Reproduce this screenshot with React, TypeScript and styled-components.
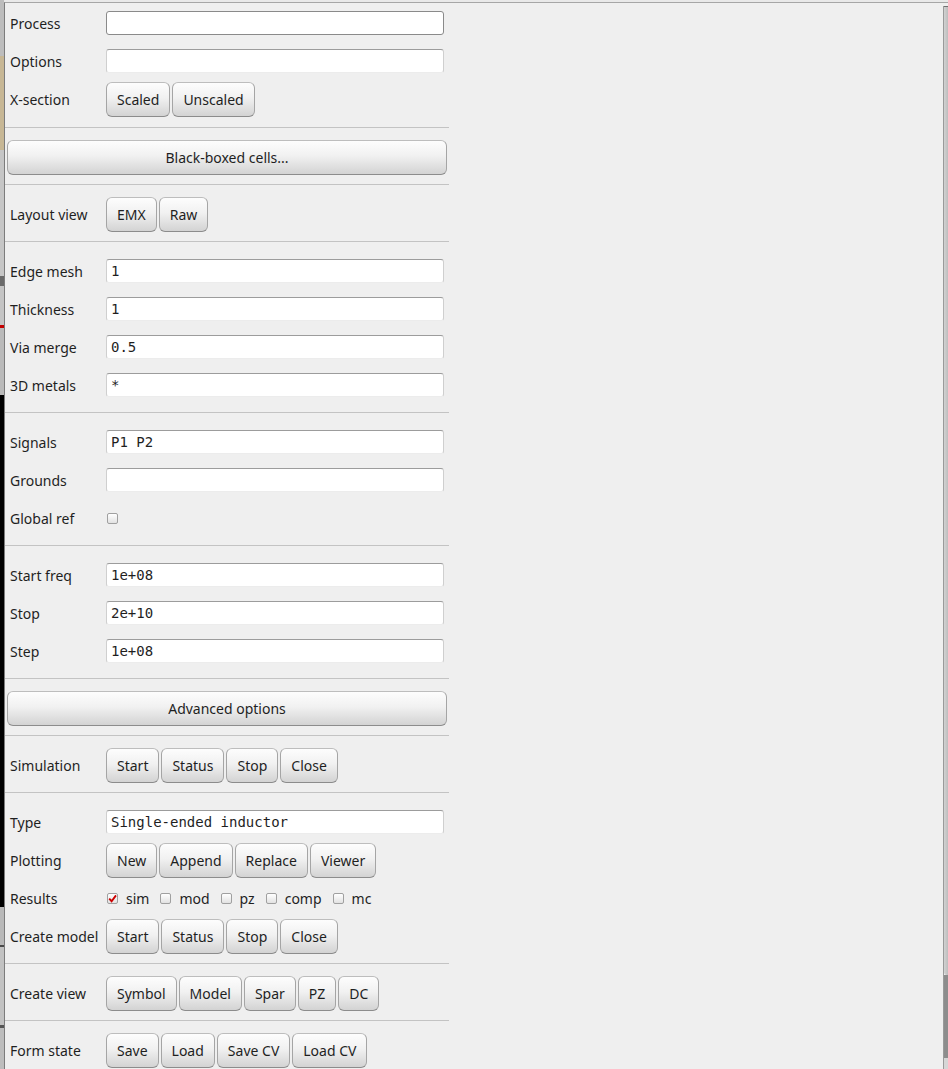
import React from "react";
import styled, { createGlobalStyle } from "styled-components";

const GlobalStyle = createGlobalStyle`
  html, body { margin: 0; padding: 0; background: #e9e9e9; }
  body { font-family: "Noto Sans", "Open Sans", sans-serif; }
  * { box-sizing: border-box; }
`;

const Window = styled.div`
  display: flex;
  width: 948px;
  height: 1069px;
  overflow: hidden;
`;

const Backdrop = styled.div`
  width: 4px;
  flex-shrink: 0;
  display: flex;
  flex-direction: column;
`;

const Swatch = styled.div<{ $h: number; $c: string }>`
  height: ${(p) => p.$h}px;
  flex-shrink: 0;
  background: ${(p) => p.$c};
`;

const Frame = styled.div`
  flex: 1;
  display: flex;
  margin-top: 2px;
  border-top: 1px solid #a6a6a6;
  border-left: 1px solid #7c7c7c;
  background: #efefef;
  min-width: 0;
`;

const Form = styled.div`
  width: 444px;
  flex-shrink: 0;
  display: flex;
  flex-direction: column;
`;

const Spacer = styled.div`
  flex: 1;
`;

const Section = styled.div<{ $first?: boolean; $last?: boolean }>`
  padding: ${(p) => (p.$first ? "1px 0 9px" : "10px 0 8px")};
  border-bottom: ${(p) => (p.$last ? "none" : "1px solid #c3c3c3")};
`;

const Row = styled.div`
  display: grid;
  grid-template-columns: 96px 1fr;
  align-items: center;
  height: 38px;
  padding: 0 5px;
`;

const WideRow = styled.div`
  display: flex;
  align-items: center;
  height: 38px;
  padding: 0 2px;
`;

const Label = styled.span`
  font-size: 14px;
  color: #1f1f1f;
  white-space: nowrap;
  line-height: 19px;
`;

const Field = styled.input<{ $focused?: boolean }>`
  width: 338px;
  height: 24px;
  margin: 0;
  padding: 0 4px;
  font-family: "DejaVu Sans Mono", "Liberation Mono", monospace;
  font-size: 14px;
  color: #1f1f1f;
  background: #ffffff;
  border-radius: 3px;
  outline: none;
  border: 1px solid ${(p) => (p.$focused ? "#8a8a8a" : "#cfcfcf")};
  border-top-color: ${(p) => (p.$focused ? "#8a8a8a" : "#9c9c9c")};
  border-bottom-color: ${(p) => (p.$focused ? "#8a8a8a" : "#ececec")};
`;

const ButtonGroup = styled.div`
  display: flex;
  gap: 2px;
`;

const Button = styled.button`
  height: 35px;
  padding: 0 10px;
  margin: 0;
  font-family: "Noto Sans", "Open Sans", sans-serif;
  font-size: 14px;
  color: #1f1f1f;
  border: 1px solid #a5a5a5;
  border-top-color: #bdbdbd;
  border-bottom-color: #8c8c8c;
  border-radius: 6px;
  background: linear-gradient(#fdfdfd 0%, #f1f1f1 45%, #d3d3d3 100%);
  white-space: nowrap;
`;

const WideButton = styled(Button)`
  width: 100%;
`;

const Checks = styled.div`
  display: flex;
  align-items: center;
  padding-left: 1px;
`;

const Box = styled.span`
  width: 11px;
  height: 11px;
  flex-shrink: 0;
  border: 1px solid #a0a0a0;
  border-radius: 2px;
  background: linear-gradient(#ffffff, #e2e2e2);
  display: flex;
  align-items: center;
  justify-content: center;
`;

const CheckText = styled.span`
  font-size: 14px;
  color: #1f1f1f;
  margin: 0 11px 0 8px;
  line-height: 19px;
`;

const Scrollbar = styled.div`
  width: 5px;
  flex-shrink: 0;
  display: flex;
  flex-direction: column;
  margin-top: 3px;
  border-left: 1px solid #9a9a9a;
`;

const Thumb = styled.div`
  height: 969px;
  background: linear-gradient(90deg, #d2d2d2, #bdbdbd);
  border-top: 1px solid #707070;
  border-bottom-left-radius: 3px;
`;

const Trough = styled.div`
  flex: 1;
  background: #8d8d8d;
`;

const Arrow = styled.div`
  height: 11px;
  background: #d6d6d6;
`;

type Item =
  | { kind: "field"; label: string; value: string; focused?: boolean }
  | { kind: "buttons"; label: string; buttons: string[] }
  | { kind: "wide"; text: string }
  | { kind: "checks"; label: string; checks: { text?: string; on?: boolean }[] };

const sections: Item[][] = [
  [
    { kind: "field", label: "Process", value: "", focused: true },
    { kind: "field", label: "Options", value: "" },
    { kind: "buttons", label: "X-section", buttons: ["Scaled", "Unscaled"] },
  ],
  [{ kind: "wide", text: "Black-boxed cells..." }],
  [{ kind: "buttons", label: "Layout view", buttons: ["EMX", "Raw"] }],
  [
    { kind: "field", label: "Edge mesh", value: "1" },
    { kind: "field", label: "Thickness", value: "1" },
    { kind: "field", label: "Via merge", value: "0.5" },
    { kind: "field", label: "3D metals", value: "*" },
  ],
  [
    { kind: "field", label: "Signals", value: "P1 P2" },
    { kind: "field", label: "Grounds", value: "" },
    { kind: "checks", label: "Global ref", checks: [{}] },
  ],
  [
    { kind: "field", label: "Start freq", value: "1e+08" },
    { kind: "field", label: "Stop", value: "2e+10" },
    { kind: "field", label: "Step", value: "1e+08" },
  ],
  [{ kind: "wide", text: "Advanced options" }],
  [{ kind: "buttons", label: "Simulation", buttons: ["Start", "Status", "Stop", "Close"] }],
  [
    { kind: "field", label: "Type", value: "Single-ended inductor" },
    { kind: "buttons", label: "Plotting", buttons: ["New", "Append", "Replace", "Viewer"] },
    {
      kind: "checks",
      label: "Results",
      checks: [
        { text: "sim", on: true },
        { text: "mod" },
        { text: "pz" },
        { text: "comp" },
        { text: "mc" },
      ],
    },
    { kind: "buttons", label: "Create model", buttons: ["Start", "Status", "Stop", "Close"] },
  ],
  [{ kind: "buttons", label: "Create view", buttons: ["Symbol", "Model", "Spar", "PZ", "DC"] }],
  [{ kind: "buttons", label: "Form state", buttons: ["Save", "Load", "Save CV", "Load CV"] }],
];

const backdrop: [number, string][] = [
  [56, "#bdbdbd"],
  [94, "#c7b795"],
  [126, "#c6c6c6"],
  [10, "#6a6a6a"],
  [39, "#c4c4c4"],
  [3, "#c40000"],
  [67, "#bababa"],
  [512, "#000000"],
  [38, "#b9b9b9"],
  [2, "#4a4a4a"],
  [78, "#c2c2c2"],
  [3, "#555555"],
  [42, "#bdbdbd"],
];

const Tick = () => (
  <svg width="9" height="9" viewBox="0 0 9 9">
    <path d="M1.2 4.6 L3.6 7.2 L8 1.4" fill="none" stroke="#cc0000" strokeWidth="1.9" />
  </svg>
);

const renderItem = (item: Item, i: number) => {
  switch (item.kind) {
    case "field":
      return (
        <Row key={i}>
          <Label>{item.label}</Label>
          <Field defaultValue={item.value} $focused={item.focused} readOnly />
        </Row>
      );
    case "buttons":
      return (
        <Row key={i}>
          <Label>{item.label}</Label>
          <ButtonGroup>
            {item.buttons.map((b) => (
              <Button key={b}>{b}</Button>
            ))}
          </ButtonGroup>
        </Row>
      );
    case "wide":
      return (
        <WideRow key={i}>
          <WideButton>{item.text}</WideButton>
        </WideRow>
      );
    case "checks":
      return (
        <Row key={i}>
          <Label>{item.label}</Label>
          <Checks>
            {item.checks.map((c, j) => (
              <React.Fragment key={j}>
                <Box>{c.on ? <Tick /> : null}</Box>
                {c.text ? <CheckText>{c.text}</CheckText> : null}
              </React.Fragment>
            ))}
          </Checks>
        </Row>
      );
  }
};

export default function App() {
  return (
    <>
      <GlobalStyle />
      <Window>
        <Backdrop>
          {backdrop.map(([h, c], i) => (
            <Swatch key={i} $h={h} $c={c} />
          ))}
        </Backdrop>
        <Frame>
          <Form>
            {sections.map((items, si) => (
              <Section key={si} $first={si === 0} $last={si === sections.length - 1}>
                {items.map(renderItem)}
              </Section>
            ))}
          </Form>
          <Spacer />
          <Scrollbar>
            <Thumb />
            <Trough />
            <Arrow />
          </Scrollbar>
        </Frame>
      </Window>
    </>
  );
}
